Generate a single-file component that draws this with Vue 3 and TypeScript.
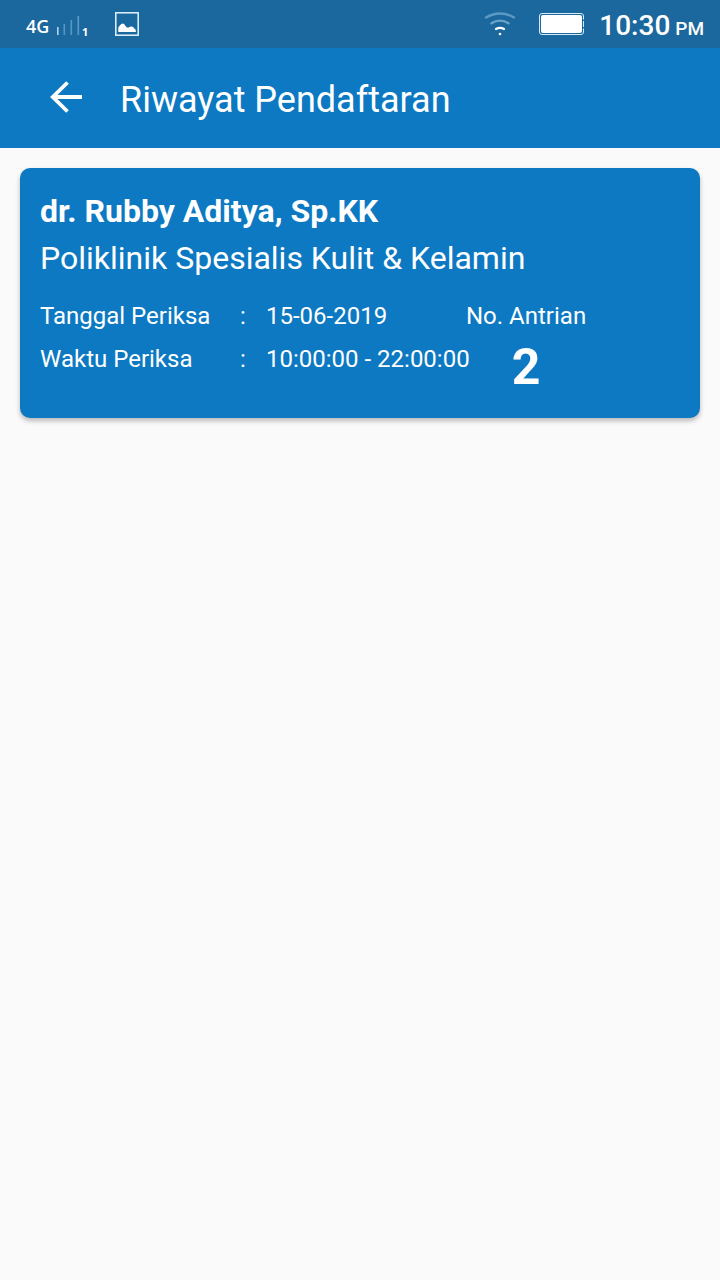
<script setup lang="ts">
interface Registration {
  doctor: string
  clinic: string
  date: string
  time: string
  queue: number
}

const registrations: Registration[] = [
  {
    doctor: 'dr. Rubby Aditya, Sp.KK',
    clinic: 'Poliklinik Spesialis Kulit & Kelamin',
    date: '15-06-2019',
    time: '10:00:00 - 22:00:00',
    queue: 2,
  },
]
</script>

<template>
  <div class="screen">
    <div class="status">
      <span class="network">4G</span>
      <svg class="signal" width="24" height="24" viewBox="0 0 24 24" aria-hidden="true">
        <rect x="0" y="15" width="1.6" height="8" fill="#b5d3e8" />
        <rect x="6.5" y="12" width="1.6" height="11" fill="#5797c4" />
        <rect x="13.5" y="8" width="1.6" height="15" fill="#5797c4" />
        <rect x="20.5" y="4" width="1.6" height="19" fill="#5c9ac4" />
      </svg>
      <span class="sim">1</span>
      <svg class="picture" width="24" height="24" viewBox="0 0 24 24" aria-hidden="true">
        <rect x="0.8" y="0.8" width="22.4" height="22.4" fill="none" stroke="#e4f3fd" stroke-width="1.5" />
        <path d="M3.3 20V15.5L5 13.3Q7.2 10.5 9 12L11.3 15 13 15.8 15 14.8Q17 13.8 18.5 15.5L20.8 18V20Z" fill="#fff" />
      </svg>
      <svg class="wifi" width="32" height="24" viewBox="0 0 32 24" fill="none" stroke-linecap="round" aria-hidden="true">
        <path d="M2 5.5Q16-2.5 30 5.5" stroke="#5c9ac4" stroke-width="2.4" />
        <path d="M7.5 11.3Q16 6 24.5 11.3" stroke="#69a4cb" stroke-width="2.4" />
        <path d="M12 17Q16 14.8 20 17" stroke="#fff" stroke-width="2.2" />
        <circle cx="16" cy="22" r="1.3" fill="#fff" />
      </svg>
      <svg class="battery" width="46" height="22" viewBox="0 0 46 22" aria-hidden="true">
        <path d="M44.5 6.5V3Q44.5.5 42 .5H3Q.5.5.5 3V19Q.5 21.5 3 21.5H42Q44.5 21.5 44.5 19V15.5M44.5 8V14" fill="none" stroke="#d5eafa" />
        <path d="M4 2H41Q43 2 43 4V18Q43 20 41 20H4Q2 20 2 18V4Q2 2 4 2Z" fill="#fff" />
      </svg>
      <span class="clock">10:30 <small>PM</small></span>
    </div>
    <header class="bar">
      <button class="back" type="button" aria-label="Kembali">
        <svg width="34" height="34" viewBox="0 0 34 34" fill="none" stroke="#fff" stroke-width="3.8" aria-hidden="true">
          <path d="M32 17H3M17.5 2.5L2.8 17 17.5 31.5" />
        </svg>
      </button>
      <h1>Riwayat Pendaftaran</h1>
    </header>
    <main>
      <article v-for="item in registrations" :key="item.doctor" class="card">
        <h2>{{ item.doctor }}</h2>
        <p class="clinic">{{ item.clinic }}</p>
        <div class="details">
          <table>
            <tbody>
              <tr>
                <th scope="row">Tanggal Periksa</th>
                <td class="colon">:</td>
                <td>{{ item.date }}</td>
              </tr>
              <tr>
                <th scope="row">Waktu Periksa</th>
                <td class="colon">:</td>
                <td>{{ item.time }}</td>
              </tr>
            </tbody>
          </table>
          <div class="queue">
            <span>No. Antrian</span>
            <strong>{{ item.queue }}</strong>
          </div>
        </div>
      </article>
    </main>
  </div>
</template>

<style>
body {
  background: #fafafa;
}
</style>

<style scoped>
.screen {
  min-height: 100vh;
  background: #fafafa;
  color: #fff;
  font-family: Roboto, "Liberation Sans", sans-serif;
}
.status {
  display: flex;
  align-items: center;
  height: 48px;
  padding: 0 16px 0 26px;
  background: #1b689e;
}
.network {
  width: 31px;
  padding-top: 4px;
  font: 600 18px/24px "Open Sans", "Noto Sans", sans-serif;
}
.sim {
  width: 8px;
  padding: 16px 0 0 1px;
  box-sizing: border-box;
  font: 700 11px/12px "Open Sans", sans-serif;
}
.picture {
  margin-left: 26px;
}
.wifi {
  margin-left: auto;
}
.battery {
  margin-left: 23px;
}
.clock {
  margin-left: 14px;
  padding-top: 6px;
  font-size: 28px;
  font-weight: 500;
  line-height: 36px;
  white-space: nowrap;
}
.clock small {
  margin-left: -2px;
  font-size: 19px;
}
.bar {
  display: flex;
  align-items: center;
  height: 100px;
  padding: 0 20px 0 50px;
  background: #0c79c2;
}
.back {
  display: flex;
  width: 70px;
  padding: 0 0 2px;
  border: 0;
  background: none;
  cursor: pointer;
}
h1 {
  margin: 0;
  padding-top: 4px;
  font-size: 36px;
  font-weight: 400;
  line-height: 48px;
}
main {
  padding: 20px;
}
.card {
  padding: 20px;
  border-radius: 10px;
  background: #0c79c2;
  box-shadow: 0 3px 5px rgba(0, 0, 0, 0.26);
}
h2 {
  margin: 0;
  font-size: 32px;
  font-weight: 700;
  line-height: 46px;
}
.clinic {
  margin: 0 0 13px;
  font-size: 32px;
  line-height: 48px;
}
.details {
  display: flex;
  align-items: flex-start;
  font-size: 24px;
  line-height: 43px;
}
table {
  width: 426px;
  table-layout: fixed;
  border-collapse: collapse;
}
th,
td {
  padding: 0;
  font-weight: 400;
  text-align: left;
  white-space: nowrap;
}
th {
  width: 200px;
}
.colon {
  width: 26px;
}
.queue {
  display: flex;
  flex-direction: column;
  align-items: center;
}
.queue strong {
  padding-bottom: 2px;
  font-size: 50px;
  line-height: 58px;
}
</style>
